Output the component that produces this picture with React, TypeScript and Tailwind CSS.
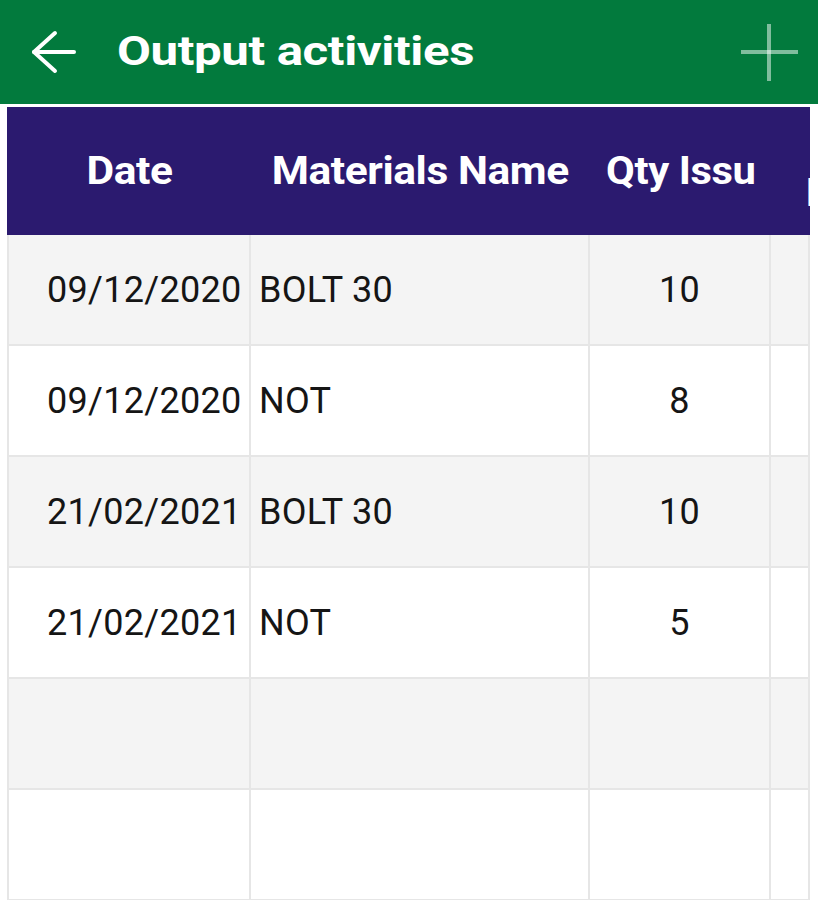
const rows = [
  { date: "09/12/2020", name: "BOLT 30", qty: "10" },
  { date: "09/12/2020", name: "NOT", qty: "8" },
  { date: "21/02/2021", name: "BOLT 30", qty: "10" },
  { date: "21/02/2021", name: "NOT", qty: "5" },
  { date: "", name: "", qty: "" },
  { date: "", name: "", qty: "" },
];

const grid = "grid grid-cols-[244px_339px_181px_39px]";

export default function App() {
  return (
    <div className="w-[818px] h-[900px] overflow-hidden bg-white font-['Roboto',sans-serif]">
      <header className="h-[104px] bg-[#027a3d] flex items-center">
        <button className="ml-[31px] w-[46px] h-[46px] flex items-center justify-center text-white">
          <svg width="46" height="46" viewBox="0 0 46 46" fill="none" stroke="currentColor" strokeWidth="4" strokeLinecap="round" strokeLinejoin="round">
            <path d="M3 23 H43" />
            <path d="M24 4 L3 23 L24 42" />
          </svg>
        </button>
        <h1 className="ml-[40px] text-[40px] font-bold text-white leading-none tracking-[-0.3px] origin-left scale-x-[1.23] whitespace-nowrap">
          Output activities
        </h1>
        <div className="ml-auto mr-[20px] w-[57px] h-[57px] relative">
          <div className="absolute left-[26px] top-0 w-[4px] h-[57px] bg-white/50" />
          <div className="absolute top-[26px] left-0 h-[4px] w-[57px] bg-white/50" />
        </div>
      </header>

      <div className="mt-[3px] ml-[7px] w-[803px]">
        <div className={`${grid} h-[128px] bg-[#2b1a6f] text-white font-bold text-[39px] tracking-[-0.4px]`}>
          <div className="flex items-center justify-center">
            <span className="scale-x-[1.09]">Date</span>
          </div>
          <div className="flex items-center justify-center whitespace-nowrap">
            <span className="scale-x-[1.09]">Materials Name</span>
          </div>
          <div className="flex items-center justify-center whitespace-nowrap overflow-hidden">
            <span className="scale-x-[1.07]">Qty Issu</span>
          </div>
          <div className="flex items-center overflow-hidden pl-[35px] pt-[44px] whitespace-nowrap">B</div>
        </div>
        {rows.map((r, i) => (
          <div
            key={i}
            className={`${grid} h-[111px] text-[36px] tracking-[0.3px] text-[#151515] ${i % 2 === 0 ? "bg-[#f4f4f4]" : "bg-white"}`}
          >
            <div className="flex items-center pl-[38px] border-l-2 border-b-2 border-r-2 border-[#e6e6e6] whitespace-nowrap">
              {r.date}
            </div>
            <div className="flex items-center pl-[8px] border-b-2 border-r-2 border-[#e6e6e6] whitespace-nowrap">
              {r.name}
            </div>
            <div className="flex items-center justify-center border-b-2 border-r-2 border-[#e6e6e6]">
              {r.qty}
            </div>
            <div className="border-b-2 border-r-2 border-[#e6e6e6]" />
          </div>
        ))}
      </div>
    </div>
  );
}
